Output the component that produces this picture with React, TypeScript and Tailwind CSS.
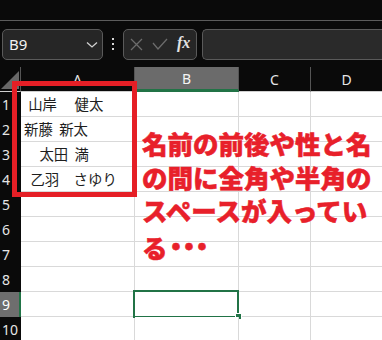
import React from 'react';

const jp = { fontFamily: '"Noto Sans CJK JP", "Noto Sans", sans-serif' };

const names: { text: string; pad: string }[] = [
  { text: ' 山岸　 健太', pad: 'pl-[4px]' },
  { text: '新藤  新太', pad: 'pl-[3px]' },
  { text: '　太田  満', pad: 'pl-[4px]' },
  { text: '  乙羽　さゆり', pad: 'pl-[3px]' },
];

const rows = [1, 2, 3, 4, 5, 6, 7, 8, 9, 10, 11];

const App = () => {
  return (
    <div
      className="relative w-[382px] h-[340px] overflow-hidden bg-[#0a0a0a]"
      style={{ fontFamily: '"Noto Sans", "Open Sans", sans-serif' }}
    >
      {/* ribbon edge */}
      <div className="h-[21px] border-b border-[#5c5c5c]" />

      {/* name box + formula bar */}
      <div className="h-[46px] flex items-center">
        <div className="ml-[2px] w-[101px] h-[31px] rounded-[5px] border border-[#5a5a5a] bg-[#262626] flex items-center justify-between pl-[6px] pr-[4px]">
          <span className="text-[15px] text-[#f2f2f2] leading-none">B9</span>
          <svg width="12" height="8" viewBox="0 0 12 8" className="mt-[1px]">
            <polyline points="1,1.5 6,6 11,1.5" fill="none" stroke="#d0d0d0" strokeWidth="1.3" />
          </svg>
        </div>
        <div className="ml-[9px] w-[2px] flex flex-col gap-[3px]">
          <span className="w-[2px] h-[2px] bg-[#d6d6d6]" />
          <span className="w-[2px] h-[2px] bg-[#d6d6d6]" />
          <span className="w-[2px] h-[2px] bg-[#d6d6d6]" />
        </div>
        <div className="ml-[9px] w-[74px] h-[31px] rounded-[5px] border border-[#5a5a5a] bg-[#262626] flex items-center pl-[6px] gap-[9px]">
          <svg width="13" height="13" viewBox="0 0 13 13">
            <path d="M1 1 L12 12 M12 1 L1 12" stroke="#6c6c6c" strokeWidth="1.3" />
          </svg>
          <svg width="16" height="12" viewBox="0 0 16 12">
            <polyline points="1,5 6,11 15,1" fill="none" stroke="#6c6c6c" strokeWidth="1.3" />
          </svg>
          <span
            className="text-[16px] italic font-bold text-[#e2e2e2] leading-none -mt-[2px]"
            style={{ fontFamily: '"Liberation Serif", serif' }}
          >
            fx
          </span>
        </div>
        <div className="ml-[5px] flex-1 h-[31px] rounded-l-[5px] border border-r-0 border-[#5a5a5a] bg-[#2a2a2a]" />
      </div>

      {/* sheet */}
      <div className="grid grid-cols-[21px_114px_104px_72px_71px] text-[14px]">
        {/* header row */}
        <div className="relative h-[25px] border-r border-[#555] border-b border-b-[#cfcfcf]">
          <svg width="20" height="20" viewBox="0 0 20 20" className="absolute right-[1px] bottom-[2px]">
            <polygon points="2,20 20,2 20,20" fill="#686868" />
          </svg>
        </div>
        <div className="h-[25px] flex items-center justify-center text-[#e6e6e6] border-r border-[#555] border-b border-b-[#cfcfcf]">A</div>
        <div className="h-[25px] flex items-center justify-center text-[#f4f4f4] bg-[#6b6b6b] border-r border-[#555] border-b-[3px] border-b-[#217346]">B</div>
        <div className="h-[25px] flex items-center justify-center text-[#e6e6e6] border-r border-[#555] border-b border-b-[#cfcfcf]">C</div>
        <div className="h-[25px] flex items-center justify-center text-[#e6e6e6] border-b border-b-[#cfcfcf]">D</div>

        {rows.map((r) => (
          <React.Fragment key={r}>
            <div
              className={`h-[25px] flex items-center pl-[2px] ${
                r === 9
                  ? 'bg-[#6e6e6e] text-white border-r-2 border-[#217346]'
                  : 'text-[#e6e6e6]'
              }`}
            >
              {r}
            </div>
            <div className="h-[25px] bg-white border-r border-b border-[#d9d9d9] flex items-center overflow-hidden">
              {r <= 4 && (
                <span
                  className={`${names[r - 1].pad} whitespace-pre text-[14.4px] text-[#1e1e1e] leading-none`}
                  style={jp}
                >
                  {names[r - 1].text}
                </span>
              )}
            </div>
            <div className="relative h-[25px] bg-white border-r border-b border-[#d9d9d9]">
              {r === 9 && (
                <>
                  <div className="absolute -left-[2px] -top-[2px] w-[106px] h-[28px] border-2 border-[#217346]" />
                  <div className="absolute left-[100px] top-[21px] w-[7px] h-[7px] bg-[#217346] border border-white" />
                </>
              )}
            </div>
            <div className="h-[25px] bg-white border-r border-b border-[#d9d9d9]" />
            <div className="h-[25px] bg-white border-b border-[#d9d9d9]" />
          </React.Fragment>
        ))}
      </div>

      {/* red frame around A1:A4 */}
      <div className="absolute left-[12px] top-[81px] w-[125px] h-[116px] border-[5px] border-[#e51f26]" />

      {/* annotation */}
      <div
        className="absolute left-[142px] top-[126px] text-[25.5px] leading-[33.5px] font-black text-[#e8202a] whitespace-nowrap [-webkit-text-stroke:0.5px_#e8202a]"
        style={jp}
      >
        名前の前後や性と名
        <br />
        の間に全角や半角の
        <br />
        スペースが入ってい
        <br />
        る<span className="text-[34px] leading-none tracking-[-4px] relative top-[2px]">･･･</span>
      </div>
    </div>
  );
};

export default App;
